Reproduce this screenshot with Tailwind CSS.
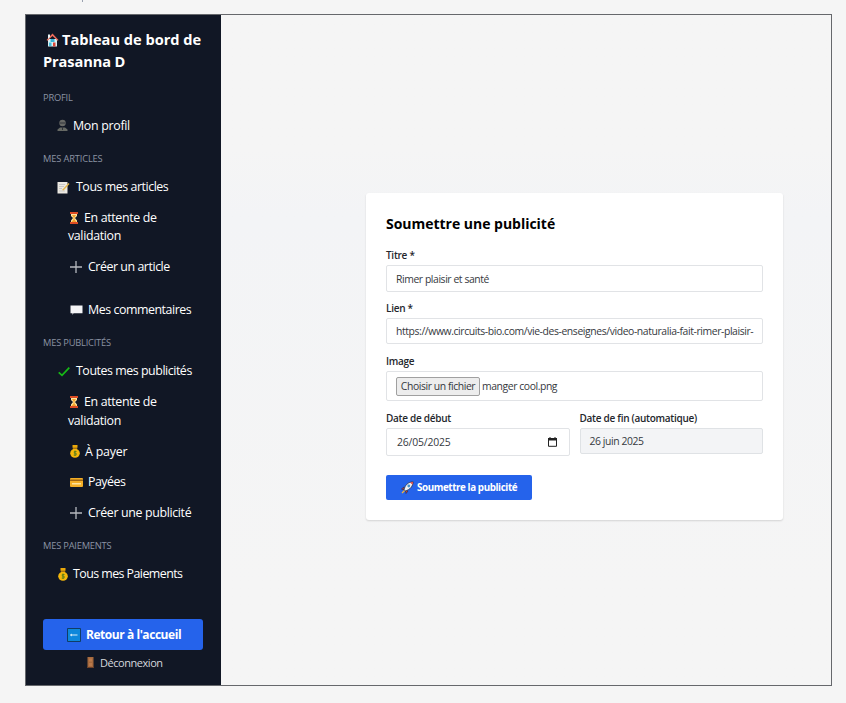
<!DOCTYPE html>
<html lang="fr">
<head>
<meta charset="utf-8">
<title>Tableau de bord</title>
<script src="https://cdn.jsdelivr.net/npm/@tailwindcss/browser@4"></script>
</head>
<body class="w-[846px] h-[703px] overflow-hidden bg-[#f5f5f5] pt-[14px] pl-[25px] font-['Open_Sans','Noto_Sans',sans-serif] relative">
<span class="absolute left-[82px] top-0 w-px h-[2px] bg-gray-400"></span>
<div class="w-[807px] h-[672px] border border-[#66686c] flex bg-[#f5f5f5]">
  <aside class="w-[195px] shrink-0 bg-[#111725] text-white pl-[17px] pr-[18px] pt-[14px] flex flex-col text-[12.4px] leading-[18.7px] tracking-[-0.45px] whitespace-nowrap">
    <h1 class="text-[14.6px] leading-[21.5px] font-bold tracking-[0px] h-[60.5px]">
      <span class="flex items-center"><svg class="w-[13px] h-[14px] ml-[3px] mr-[3px]" viewBox="0 0 13 14"><path d="M2 6h9v7.5H2z" fill="#d9f1f5"/><path d="M6.5.5 12.5 7l-1 .8L6.5 3 1.500 7.800.5 7z" fill="#ee6c5b"/><path d="M2 1.500h2V4L2 6z" fill="#e8f4f6"/><path d="M4.500 6h4v3h-4z" fill="#38b4d8"/><path d="M3 9.500h2.500V13H3z" fill="#45bddb"/><path d="M7 9.500h2.500v4H7z" fill="#d9483b"/></svg>Tableau de bord de</span>
      <span class="block tracking-[-0.1px]">Prasanna D</span>
    </h1>
    <h2 class="text-[9.300px] leading-[15px] text-[#8b93a3] tracking-[-0.2px]">PROFIL</h2>
    <nav class="mt-[5.100px] pl-[14px]">
      <a class="flex items-center pt-[7px] pb-[5px] tracking-[-0.3px]"><svg class="w-[11px] h-[13px] mr-[5px]" viewBox="0 0 11 13"><circle cx="5.500" cy="4" r="3.200" fill="#686966"/><path d="M.5 12V10.500L3 8.500h5l2.500 2V12z" fill="#666964"/><path d="M3 4h5M5.500 8v3" stroke="#30343a"/></svg>Mon profil</a>
    </nav>
    <h2 class="mt-[10.600px] text-[9.300px] leading-[15px] text-[#8b93a3] tracking-[-0.15px]">MES ARTICLES</h2>
    <nav class="mt-[5.100px] pl-[14px]">
      <a class="flex items-center pt-[7px] pb-[5px]"><svg class="w-[13px] h-[13px] mr-[6px]" viewBox="0 0 13 13"><path d="M.5 1h10v11.500H.5z" fill="#ece9e2"/><path d="M2 3.500h6M2 5.500h5M2 7.500h3M2 10h6" stroke="#bbb" stroke-width=".7"/><path d="m5 9 6.500-7 1 1L6.500 9.500z" fill="#e7b84c"/></svg>Tous mes articles</a>
      <div class="pl-[11px]">
        <a class="block pt-[7px] pb-[5px] tracking-[-0.35px]"><svg class="inline-block w-[10px] h-[12px] mr-[5px] ml-[1px] align-[-2px]" viewBox="0 0 10 12"><path d="M2 1h6v3L6 6l2 2.500V11H2V8.500L4 6 2 4z" fill="#ffe3a0"/><path d="M3 3h4L5.500 5.500v2L7.500 10h-5l2-2.500v-2z" fill="#f5a52a"/><path d="M1 0h8v2H1zM1 10h8v2H1z" fill="#dc4c24"/></svg>En attente de<br>validation</a>
        <a class="flex items-center pt-[7px] pb-[5px]"><svg class="w-[12px] h-[12px] ml-[2px] mr-[6px]" viewBox="0 0 12 12"><path d="M6 0v12M0 6h12" stroke="#b6b9bf" stroke-width="1.300"/></svg>Créer un article</a>
        <a class="flex items-center pt-[7px] pb-[5px] mt-[12.300px]"><svg class="w-[13px] h-[10px] ml-[2px] mr-[5px]" viewBox="0 0 13 10"><path d="M1 .5h11.500v7.700H3.500L2.500 10V8.200H.5V.5z" fill="#f4f4f6"/></svg>Mes commentaires</a>
      </div>
    </nav>
    <h2 class="mt-[10.600px] text-[9.300px] leading-[15px] text-[#8b93a3] tracking-[-0.2px]">MES PUBLICITÉS</h2>
    <nav class="mt-[5.100px] pl-[14px]">
      <a class="flex items-center pt-[7px] pb-[5px]"><svg class="w-[12px] h-[10px] ml-[1px] mr-[6px]" viewBox="0 0 12 10"><path d="m.7 5.300 3.300 3L11.300.7" fill="none" stroke="#16b916" stroke-width="1.700"/></svg>Toutes mes publicités</a>
      <div class="pl-[11px]">
        <a class="block pt-[7px] pb-[5px] tracking-[-0.35px]"><svg class="inline-block w-[10px] h-[12px] mr-[5px] ml-[1px] align-[-2px]" viewBox="0 0 10 12"><path d="M2 1h6v3L6 6l2 2.500V11H2V8.500L4 6 2 4z" fill="#ffe3a0"/><path d="M3 3h4L5.500 5.500v2L7.500 10h-5l2-2.500v-2z" fill="#f5a52a"/><path d="M1 0h8v2H1zM1 10h8v2H1z" fill="#dc4c24"/></svg>En attente de<br>validation</a>
        <a class="flex items-center pt-[7px] pb-[5px] tracking-[-0.2px]"><svg class="w-[10px] h-[13px] ml-[2px] mr-[5px]" viewBox="0 0 10 13"><ellipse cx="5" cy="8.300" rx="4.800" ry="4.500" fill="#f4b70b"/><path d="M2.500 0h5v2L7 4H3L2.500 2z" fill="#eaa80a"/><path d="M3 3.200h4" stroke="#8b5c16"/><path d="M6.500 6.500H4.300v1.700h1.800v1.900H3.700M5 5.500v5.500" fill="none" stroke="#62801b"/></svg>À payer</a>
        <a class="flex items-center pt-[7px] pb-[5px]"><svg class="w-[13px] h-[9px] ml-[2px] mr-[5px]" viewBox="0 0 13 9"><rect width="13" height="9" rx="1" fill="#f4af27"/><path d="M0 1.500h13v1.500H0z" fill="#9d6311"/><path d="M2 5h9v1.500H2z" fill="#ffe29c"/></svg><span class="tracking-[-0.50px]">Payées</span></a>
        <a class="flex items-center pt-[7px] pb-[5px] tracking-[-0.35px]"><svg class="w-[12px] h-[12px] ml-[2px] mr-[6px]" viewBox="0 0 12 12"><path d="M6 0v12M0 6h12" stroke="#b6b9bf" stroke-width="1.300"/></svg>Créer une publicité</a>
      </div>
    </nav>
    <h2 class="mt-[10.600px] text-[9.300px] leading-[15px] text-[#8b93a3] tracking-[-0.2px]">MES PAIEMENTS</h2>
    <nav class="mt-[5.100px] pl-[14px]">
      <a class="flex items-center pt-[7px] pb-[5px] tracking-[-0.55px]"><svg class="w-[10px] h-[13px] ml-[1px] mr-[5px]" viewBox="0 0 10 13"><ellipse cx="5" cy="8.300" rx="4.800" ry="4.500" fill="#f4b70b"/><path d="M2.500 0h5v2L7 4H3L2.500 2z" fill="#eaa80a"/><path d="M3 3.200h4" stroke="#8b5c16"/><path d="M6.500 6.500H4.300v1.700h1.800v1.900H3.700M5 5.500v5.500" fill="none" stroke="#62801b"/></svg>Tous mes Paiements</a>
    </nav>
    <button class="mt-[29.500px] h-[31px] shrink-0 w-[160px] rounded-[3px] bg-[#2563eb] font-bold flex items-center pt-[2px] pl-[24px] text-[12px] tracking-[-0.45px]"><svg class="w-[14px] h-[14px] mr-[5px]" viewBox="0 0 14 14"><path d="M.5.5h13v13H.5z" fill="#0d87db" stroke="#103d67"/><path d="M3.500 7h7M5 6 3.500 7l1.500 1" fill="none" stroke="#d8eefa"/></svg>Retour à l'accueil</button>
    <a class="flex items-center mt-[4px] pl-[44px] text-[11px] tracking-[-0.45px] text-[#d5d8dd]"><svg class="w-[7px] h-[11px] mr-[6px]" viewBox="0 0 7 11"><path d="M.5 0h6v10.500h-6z" fill="#a66a3e"/><path d="M2 1.500h3v3H2zM2 6h3v3H2z" fill="#b9794b"/><path d="M0 10.500h7" stroke="#6d4028"/></svg>Déconnexion</a>
  </aside>
  <main class="flex-1 pt-[178px] pl-[145px] bg-linear-to-b from-[#f5f5f5] from-20% via-[#f3f4f6] via-30% to-[#f5f5f5] to-85%">
    <form class="w-[417px] h-[327px] bg-white rounded-[3px] shadow-[0_1px_2px_rgba(0,0,0,0.14)] px-[20px] pt-[20px] text-[10.400px] leading-[14px] tracking-[-0.42px] text-[#36393e] whitespace-nowrap">
      <h2 class="text-[14px] leading-[22px] font-bold text-black tracking-[-0.02px]">Soumettre une publicité</h2>
      <label class="block mt-[13px] h-[17px] font-semibold text-[10px] tracking-[-0.28px] text-[#24272c]">Titre *</label>
      <div class="h-[27px] rounded-[2px] border border-[#e1e3e6] px-[9px] flex items-center">Rimer plaisir et santé</div>
      <label class="block mt-[9px] h-[17px] font-semibold text-[10px] tracking-[-0.28px] text-[#24272c]">Lien *</label>
      <div class="h-[26px] rounded-[2px] border border-[#e1e3e6] px-[9px] flex items-center tracking-[-0.4px]">https://www.circuits-bio.com/vie-des-enseignes/video-naturalia-fait-rimer-plaisir-</div>
      <label class="block mt-[10px] h-[17px] font-semibold text-[10px] tracking-[-0.28px] text-[#24272c]">Image</label>
      <div class="h-[30px] rounded-[2px] border border-[#e1e3e6] px-[9px] flex items-center"><span class="w-[84px] h-[19px] mr-[2px] bg-[#ededed] border border-[#a0a0a0] rounded-[2px] flex items-center justify-center">Choisir un fichier</span>manger cool.png</div>
      <div class="flex gap-[10px] mt-[10px]">
        <div class="w-[184px]"><label class="block h-[17px] font-semibold text-[10px] tracking-[-0.28px] text-[#24272c]">Date de début</label>
          <div class="h-[28px] rounded-[2px] border border-[#e1e3e6] pl-[10px] pr-[12px] flex items-center justify-between tracking-[-0.15px]">26/05/2025<svg class="w-[9px] h-[10px]" viewBox="0 0 9 10"><path d="M.5 1.500h8v7.800h-8z" fill="none" stroke="#222"/><path d="M0 1h9v2.500H0zM1.500 0h1v2h-1zM6.500 0h1v2h-1z" fill="#222"/></svg></div></div>
        <div class="w-[184px]"><label class="block h-[17px] font-semibold text-[10px] tracking-[-0.28px] text-[#24272c]">Date de fin (automatique)</label>
          <div class="h-[26px] rounded-[2px] border border-[#dfe2e5] bg-[#f3f4f6] px-[9px] flex items-center">26 juin 2025</div></div>
      </div>
      <button class="mt-[19px] w-[146px] h-[25px] rounded-[2px] bg-[#2563eb] text-white font-bold text-[9.800px] tracking-[-0.4px] flex items-center pl-[15px]"><svg class="w-[13px] h-[13px] mr-[3px]" viewBox="0 0 13 13"><path d="m3 6-2.500 2L3 9zM7 10l-2 2.500L4.500 9z" fill="#d6443d" stroke="#222b46" stroke-width=".6"/><path d="M3 9C4 4 7 1 12.200.8 12 5 9 9 4 10z" fill="#eef1f4" stroke="#26314c" stroke-width=".8"/><path d="M9 1.500 12.200.8l-.7 3z" fill="#dd4b43"/><circle cx="7.800" cy="5" r="1.400" fill="#4692c9"/><path d="m1 12 2.500-2.500" stroke="#f2b63d" stroke-width="1.300"/></svg>Soumettre la publicité</button>
    </form>
  </main>
</div>
</body>
</html>
